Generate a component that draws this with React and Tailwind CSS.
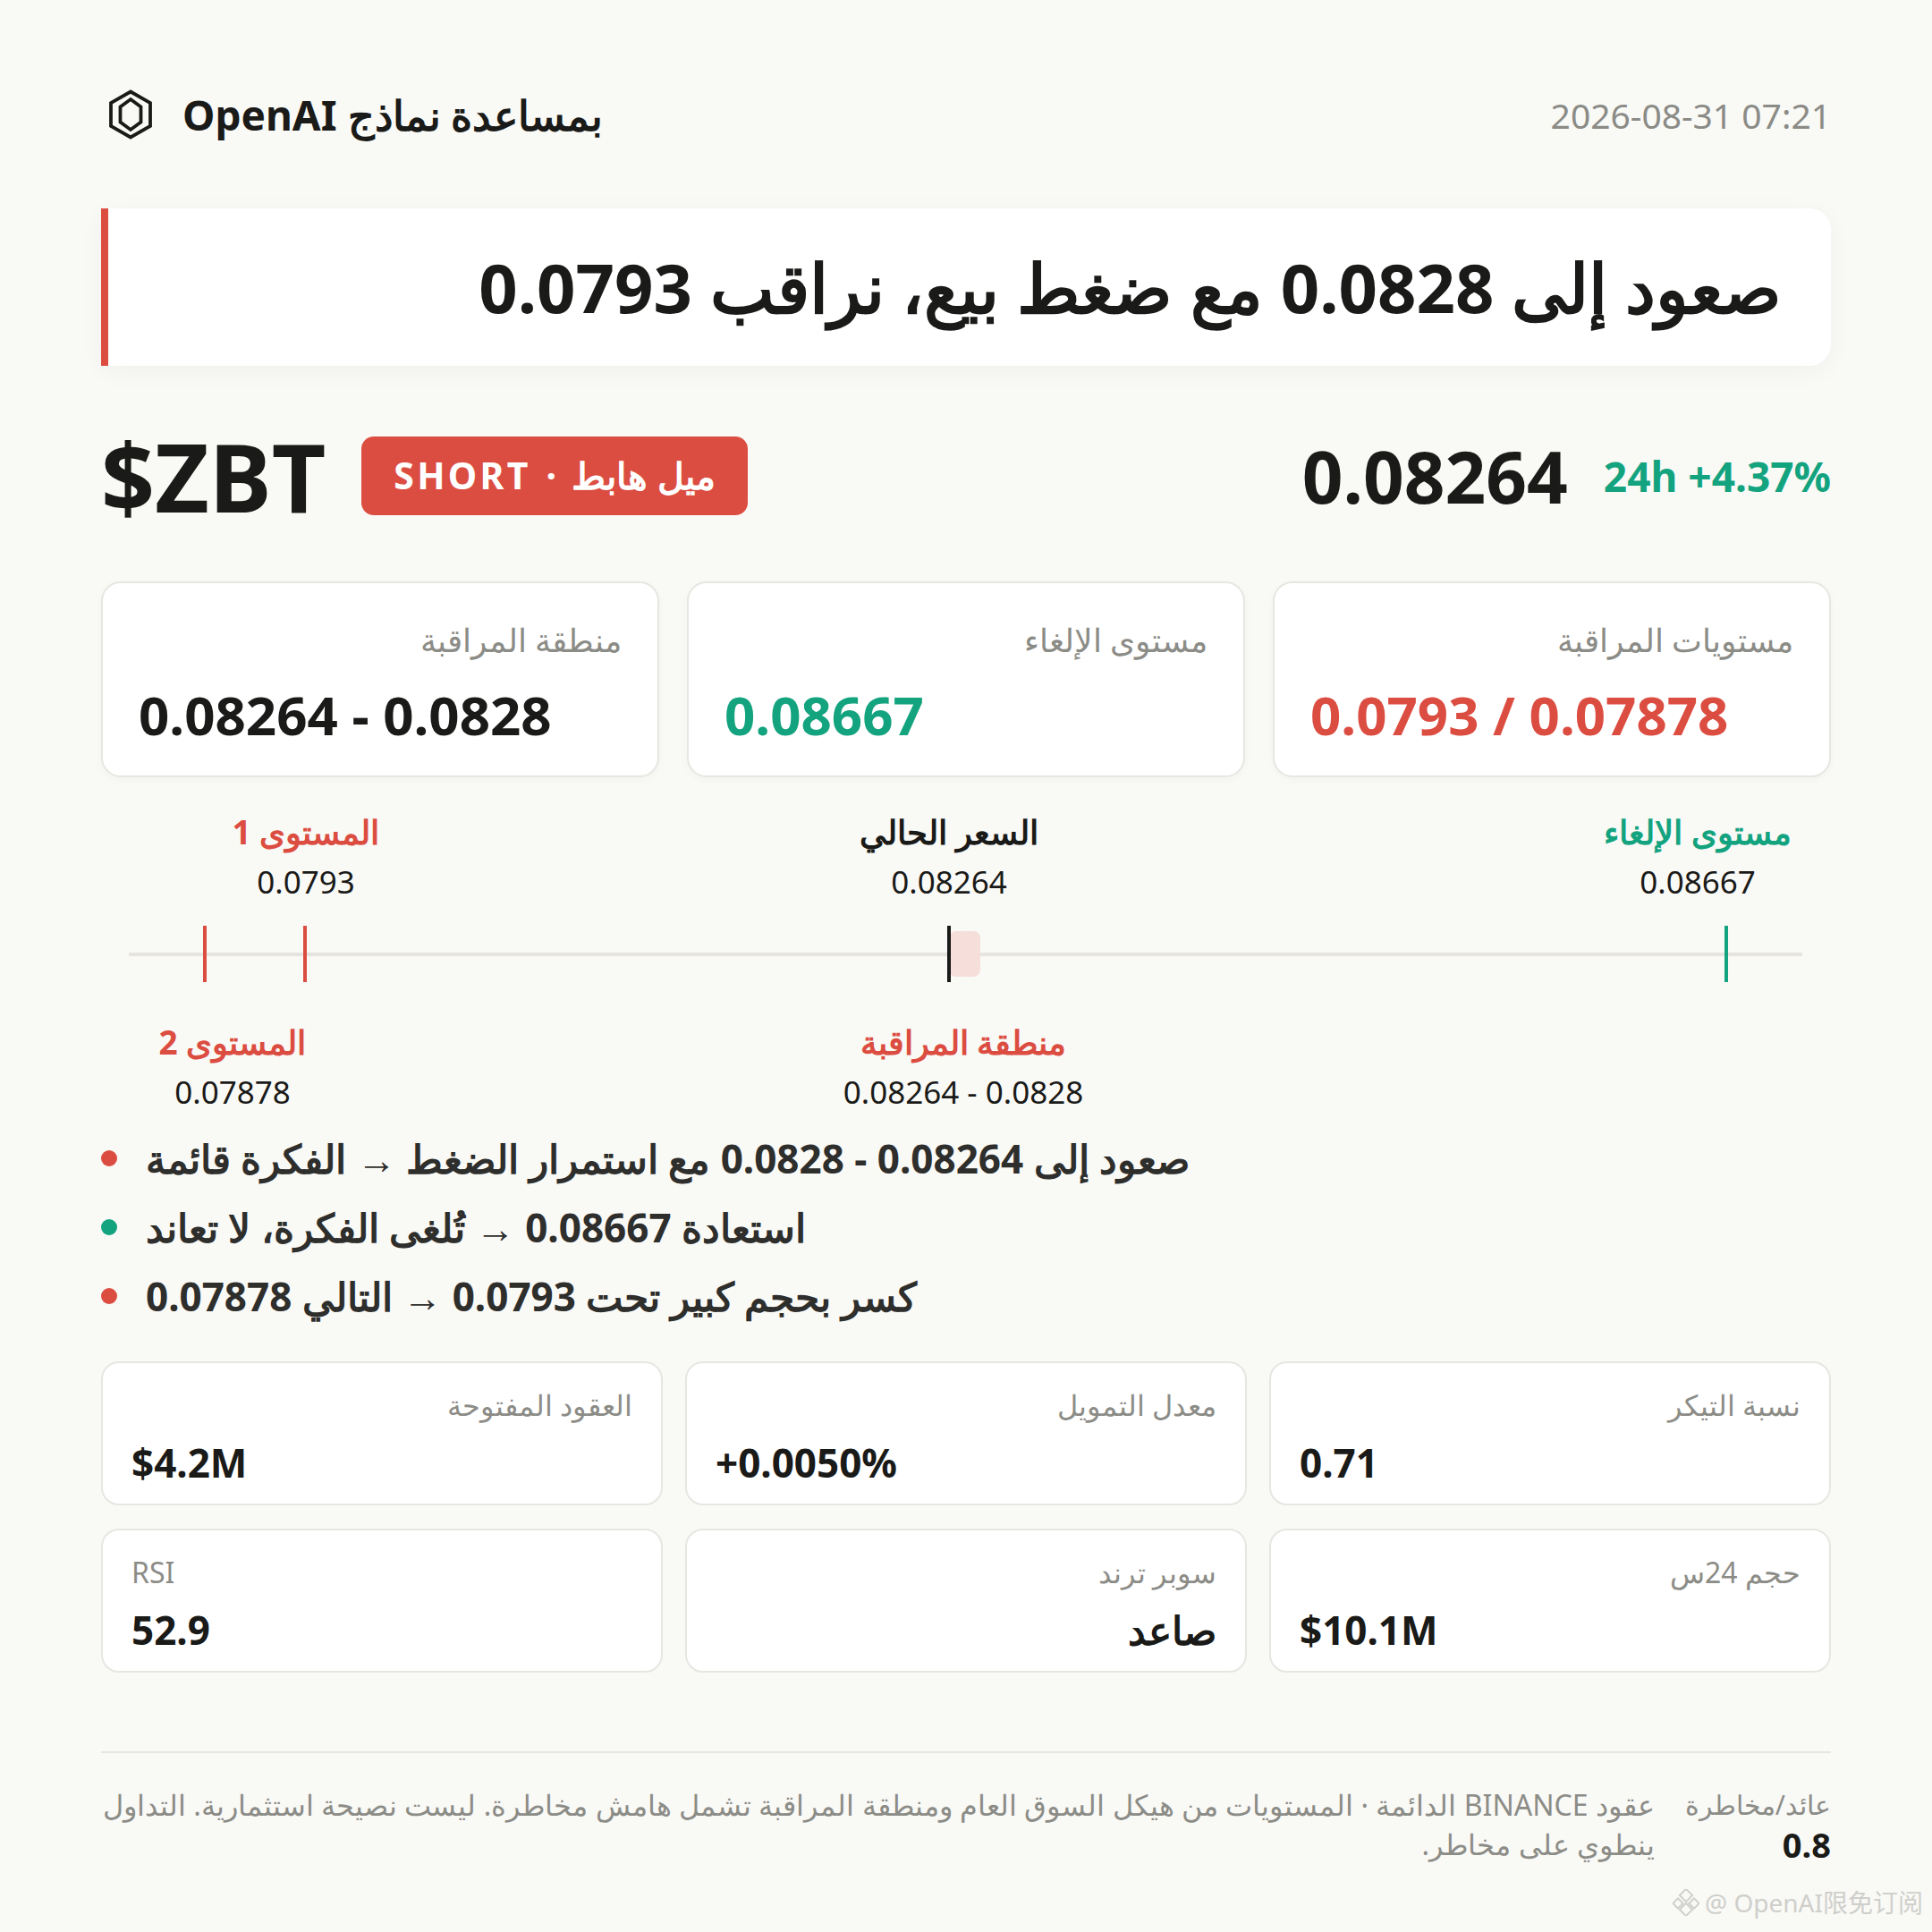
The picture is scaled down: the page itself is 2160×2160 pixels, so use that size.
import React from "react";

const MIN = 0.078386;
const MAX = 0.087065;
// track runs from 31px to 1902px inside the content box
const TRACK_L = 31;
const TRACK_W = 1871;
const px = (v) => TRACK_L + ((v - MIN) / (MAX - MIN)) * TRACK_W;

const levelCards = [
  { label: "منطقة المراقبة", value: "0.08264 - 0.0828", color: "text-[#1a1a18]" },
  { label: "مستوى الإلغاء", value: "0.08667", color: "text-[#14a37f]" },
  { label: "مستويات المراقبة", value: "0.0793 / 0.07878", color: "text-[#dc4d41]" },
];

const markers = [
  { v: 0.07878, color: "bg-[#dc4d41]" },
  { v: 0.0793, color: "bg-[#dc4d41]" },
  { v: 0.08264, color: "bg-[#1a1a18]" },
  { v: 0.08667, color: "bg-[#14a37f]" },
];

const topLabels = [
  { x: 229, title: "المستوى 1", value: "0.0793", color: "text-[#dc4d41]" },
  { x: 948, title: "السعر الحالي", value: "0.08264", color: "text-[#1a1a18]" },
  { x: 1785, title: "مستوى الإلغاء", value: "0.08667", color: "text-[#14a37f]" },
];

const bottomLabels = [
  { x: 147, title: "المستوى 2", value: "0.07878", color: "text-[#dc4d41]" },
  { x: 964, title: "منطقة المراقبة", value: "0.08264 - 0.0828", color: "text-[#dc4d41]" },
];

const bullets = [
  { dot: "bg-[#dc4d41]", text: "صعود إلى 0.08264 - 0.0828 مع استمرار الضغط → الفكرة قائمة" },
  { dot: "bg-[#14a37f]", text: "استعادة 0.08667 → تُلغى الفكرة، لا تعاند" },
  { dot: "bg-[#dc4d41]", text: "كسر بحجم كبير تحت 0.0793 → التالي 0.07878" },
];

const metrics = [
  { label: "العقود المفتوحة", value: "$4.2M" },
  { label: "معدل التمويل", value: "+0.0050%" },
  { label: "نسبة التيكر", value: "0.71" },
  { label: "RSI", value: "52.9" },
  { label: "سوبر ترند", value: "صاعد" },
  { label: "حجم 24س", value: "$10.1M" },
];

function Logo() {
  return (
    <svg width="50" height="56" viewBox="0 0 50 56" fill="none" stroke="#1a1a18" strokeWidth="3.8" strokeLinejoin="miter">
      <polygon points="25,2.5 47,15 47,41 25,53.5 3,41 3,15" />
      <polygon points="25,11 36.5,19.5 36.5,36.5 25,45 13.5,36.5 13.5,19.5" />
    </svg>
  );
}

function LevelLabel({ x, title, value, color, top }) {
  return (
    <div className="absolute -translate-x-1/2 flex flex-col items-center whitespace-nowrap" style={{ left: x, top }}>
      <div dir="auto" className={`text-[37px] leading-[48px] font-bold ${color}`}>{title}</div>
      <div dir="auto" className="mt-[8px] text-[35px] leading-[48px] text-[#1a1a18]">{value}</div>
    </div>
  );
}

export default function App() {
  return (
    <div className="relative w-[2160px] h-[2160px] bg-[#f9f9f6] font-['Noto_Sans','Open_Sans',sans-serif] text-[#1a1a18]">
      <div className="px-[113px] pt-[100px]">
        {/* header */}
        <div className="flex h-[56px] items-center justify-between">
          <div className="flex items-center gap-[33px] pl-[8px]">
            <Logo />
            <div dir="auto" className="text-[46px] font-bold leading-none">بمساعدة نماذج OpenAI</div>
          </div>
          <div className="text-[39px] text-[#8b8b86] leading-none">2026-08-31 07:21</div>
        </div>

        {/* headline */}
        <div className="mt-[77px] flex h-[176px] items-center justify-end rounded-r-[24px] border-l-[8px] border-[#dc4d41] bg-white pr-[55px] shadow-[0_6px_28px_rgba(0,0,0,0.04)]">
          <div dir="auto" className="text-[76px] font-bold leading-none">صعود إلى 0.0828 مع ضغط بيع، نراقب 0.0793</div>
        </div>

        {/* ticker row */}
        <div className="mt-[68px] flex h-[110px] items-center justify-between">
          <div className="flex items-center">
            <div className="text-[105px] font-bold leading-none">$ZBT</div>
            <div className="ml-[40px] flex h-[88px] items-center rounded-[14px] bg-[#dc4d41] px-[36px] text-[41px] font-bold text-white">
              <span className="tracking-[0.08em]">SHORT</span>
              <span className="mx-[17px]">·</span>
              <span dir="rtl">ميل هابط</span>
            </div>
          </div>
          <div className="flex items-center gap-[40px]">
            <div className="text-[80px] font-bold leading-none">0.08264</div>
            <div className="text-[46px] font-bold leading-none text-[#14a37f]">24h +4.37%</div>
          </div>
        </div>

        {/* level cards */}
        <div className="mt-[63px] grid grid-cols-3 gap-[31px]">
          {levelCards.map((c) => (
            <div key={c.label} className="h-[219px] rounded-[22px] border-2 border-[#e7e6e1] bg-white px-[40px] pt-[40px] shadow-[0_3px_10px_rgba(0,0,0,0.03)]">
              <div dir="auto" className="text-[36px] leading-[48px] text-[#8c8c87]">{c.label}</div>
              <div dir="auto" className={`mt-[24px] text-[60px] font-bold leading-[70px] ${c.color}`}>{c.value}</div>
            </div>
          ))}
        </div>

        {/* level track */}
        <div className="relative h-[393px]">
          {topLabels.map((l) => (
            <LevelLabel key={l.title} {...l} top={37} />
          ))}
          <div className="absolute top-[196px] h-[4px] bg-[#e5e4df]" style={{ left: TRACK_L, width: TRACK_W }} />
          <div
            className="absolute top-[172px] h-[51px] rounded-[8px] bg-[#f6dedb]"
            style={{ left: px(0.08264), width: px(0.0828) - px(0.08264) }}
          />
          {markers.map((m) => (
            <div key={m.v} className={`absolute top-[166px] h-[63px] w-[4px] -translate-x-1/2 ${m.color}`} style={{ left: px(m.v) }} />
          ))}
          {bottomLabels.map((l) => (
            <LevelLabel key={l.title} {...l} top={272} />
          ))}
        </div>

        {/* scenarios */}
        <div className="flex flex-col gap-[11px]">
          {bullets.map((b) => (
            <div key={b.text} className="flex h-[66px] items-center">
              <span className={`h-[18px] w-[18px] shrink-0 rounded-full ${b.dot}`} />
              <span dir="auto" className="ml-[32px] text-[44px] font-bold leading-[66px] text-[#2e2e2c]">{b.text}</span>
            </div>
          ))}
        </div>

        {/* metrics */}
        <div className="mt-[40px] grid grid-cols-3 gap-x-[25px] gap-y-[26px]">
          {metrics.map((m) => (
            <div key={m.label} className="h-[161px] rounded-[20px] border-2 border-[#e7e6e1] bg-white px-[32px] pt-[24px]">
              <div dir="auto" className="text-[32px] leading-[45px] text-[#8c8c87]">{m.label}</div>
              <div dir="auto" className="mt-[14px] text-[44px] font-bold leading-[57px]">{m.value}</div>
            </div>
          ))}
        </div>

        {/* footer */}
        <div className="mt-[88px] flex gap-[34px] border-t-2 border-[#e7e6e1] pt-[36px]">
          <div dir="auto" className="flex-1 text-[32px] leading-[44px] text-[#8c8c87]">
            عقود BINANCE الدائمة · المستويات من هيكل السوق العام ومنطقة المراقبة تشمل هامش مخاطرة. ليست نصيحة استثمارية. التداول ينطوي على مخاطر.
          </div>
          <div className="flex flex-col items-end">
            <div dir="auto" className="text-[30px] leading-[44px] text-[#8c8c87]">عائد/مخاطرة</div>
            <div className="text-[38px] font-bold leading-[44px]">0.8</div>
          </div>
        </div>
      </div>

      {/* watermark */}
      <div className="absolute bottom-[12px] right-[10px] flex items-center gap-[6px] text-[28px] text-[#cfcfcb] font-['Noto_Sans','Noto_Sans_CJK_SC',sans-serif]">
        <svg width="30" height="30" viewBox="0 0 30 30" fill="none" stroke="#cfcfcb" strokeWidth="2">
          <rect x="10" y="2" width="10" height="10" transform="rotate(45 15 7)" />
          <rect x="2" y="12" width="8" height="8" transform="rotate(45 6 16)" />
          <rect x="20" y="12" width="8" height="8" transform="rotate(45 24 16)" />
          <rect x="10" y="18" width="10" height="10" transform="rotate(45 15 23)" />
        </svg>
        <span>@ OpenAI限免订阅</span>
      </div>
    </div>
  );
}
